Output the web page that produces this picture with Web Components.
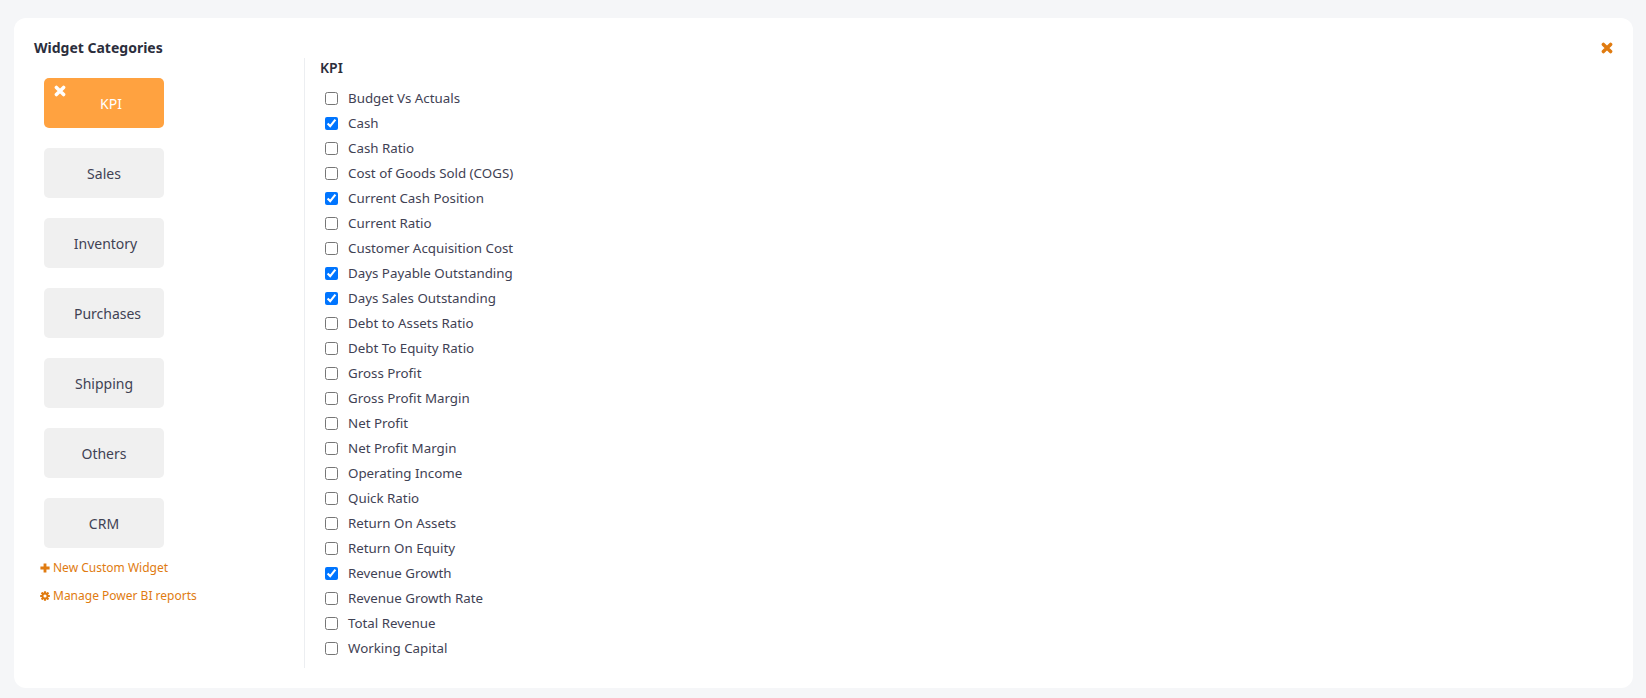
<!DOCTYPE html>
<html>
<head>
<meta charset="utf-8">
<title>Widget Categories</title>
<style>
  html,body{margin:0;height:100%;}
  body{background:#f5f6f8;font-family:"Noto Sans",sans-serif;color:#3f4254;}
</style>
</head>
<body>
<widget-panel></widget-panel>
<script>
const ICONS = {
  times:`<svg viewBox="0 0 12 12" width="100%" height="100%" style="display:block"><path d="M2.4 2.4L9.6 9.6M9.6 2.4L2.4 9.6" stroke="currentColor" stroke-width="3.5" stroke-linecap="round" fill="none"/></svg>`,
  plus:`<svg viewBox="0 0 12 12" width="100%" height="100%" style="display:block"><path d="M6 .5V11.5M.5 6H11.5" stroke="currentColor" stroke-width="3.4" fill="none"/></svg>`,
  cog:`<svg viewBox="0 0 12 12" width="100%" height="100%" style="display:block"><g fill="currentColor"><rect x="4.7" y=".2" width="2.6" height="11.6" rx=".4"/><rect x="4.7" y=".2" width="2.6" height="11.6" rx=".4" transform="rotate(45 6 6)"/><rect x="4.7" y=".2" width="2.6" height="11.6" rx=".4" transform="rotate(90 6 6)"/><rect x="4.7" y=".2" width="2.6" height="11.6" rx=".4" transform="rotate(135 6 6)"/><circle cx="6" cy="6" r="4.1"/></g><circle cx="6" cy="6" r="1.9" fill="#fff"/></svg>`
};

class CategoryButton extends HTMLElement{
  constructor(){
    super();
    this._shadowRoot = this.attachShadow({mode:"open"});
  }
  connectedCallback(){
    const active = this.hasAttribute("active");
    this._shadowRoot.innerHTML = `
      <style>
        :host{
          display:flex;
          position:relative;
          width:120px;
          height:50px;
          align-items:center;
          justify-content:center;
          box-sizing:border-box;
          border-radius:5px;
          background:#f0f0f0;
          color:#3f4254;
          font-size:14px;
        }
        :host([active]){
          background:#ffa240;
          color:#fff;
          padding-left:14px;
        }
        :host([nudge="1"]){padding-left:3px;}
        :host([nudge="2"]){padding-left:7px;}
        .close{
          position:absolute;
          left:10px;
          top:7px;
          width:12px;
          height:12px;
          color:#fff;
        }
      </style>
      ${active ? `<span class="close">${ICONS.times}</span>` : ""}
      <slot></slot>
    `;
  }
}
customElements.define("category-button", CategoryButton);

class SideLink extends HTMLElement{
  constructor(){
    super();
    this._shadowRoot = this.attachShadow({mode:"open"});
  }
  connectedCallback(){
    this._shadowRoot.innerHTML = `
      <style>
        :host{
          display:flex;
          align-items:center;
          gap:3px;
          color:#e07b10;
          font-size:12px;
          line-height:16px;
        }
        .icon{width:10px;height:10px;display:block;}
      </style>
      <span class="icon">${ICONS[this.getAttribute("icon")]}</span>
      <slot></slot>
    `;
  }
}
customElements.define("side-link", SideLink);

class WidgetCheck extends HTMLElement{
  constructor(){
    super();
    this._shadowRoot = this.attachShadow({mode:"open"});
  }
  connectedCallback(){
    this._shadowRoot.innerHTML = `
      <style>
        :host{
          display:flex;
          align-items:center;
          height:25px;
          color:#3f4254;
          font-size:13.33px;
        }
        input{
          width:13px;
          height:13px;
          margin:0 10px 0 0;
          flex:none;
        }
        .label{margin-bottom:2px;}
      </style>
      <input type="checkbox" ${this.hasAttribute("checked") ? "checked" : ""}>
      <span class="label"><slot></slot></span>
    `;
  }
}
customElements.define("widget-check", WidgetCheck);

class WidgetPanel extends HTMLElement{
  constructor(){
    super();
    this._shadowRoot = this.attachShadow({mode:"open"});
    this._categories = ["KPI","Sales","Inventory","Purchases","Shipping","Others","CRM"];
    this._widgets = [
      ["Budget Vs Actuals"],["Cash",1],["Cash Ratio"],["Cost of Goods Sold (COGS)"],
      ["Current Cash Position",1],["Current Ratio"],["Customer Acquisition Cost"],
      ["Days Payable Outstanding",1],["Days Sales Outstanding",1],["Debt to Assets Ratio"],
      ["Debt To Equity Ratio"],["Gross Profit"],["Gross Profit Margin"],["Net Profit"],
      ["Net Profit Margin"],["Operating Income"],["Quick Ratio"],["Return On Assets"],
      ["Return On Equity"],["Revenue Growth",1],["Revenue Growth Rate"],["Total Revenue"],["Working Capital"]
    ];
  }
  connectedCallback(){
    this.render();
  }
  render(){
    const nudge = {Inventory:1,Purchases:2};
    this._shadowRoot.innerHTML = `
      <style>
        :host{
          display:block;
          box-sizing:border-box;
          height:698px;
          padding:18px 13px 10px 14px;
        }
        .card{
          position:relative;
          box-sizing:border-box;
          height:100%;
          background:#fff;
          border-radius:12px;
          padding:20px;
        }
        .close{
          position:absolute;
          top:24px;
          right:20px;
          width:12px;
          height:12px;
          color:#e07b10;
        }
        h3{
          margin:0;
          font-size:14px;
          line-height:20px;
          font-weight:700;
          color:#2b2e3c;
        }
        .body{
          display:flex;
          height:610px;
        }
        .side{
          width:270px;
          flex:none;
          box-sizing:border-box;
          padding:0 0 0 6px;
        }
        .cats{
          display:flex;
          flex-direction:column;
          gap:20px;
          padding:20px 0 0 4px;
        }
        .links{
          display:flex;
          flex-direction:column;
          gap:12px;
          padding-top:12px;
        }
        .main{
          border-left:1px solid #eceef1;
          padding-left:15px;
          height:610px;
        }
        .main-title{
          font-size:14px;
          line-height:20px;
          font-weight:600;
          color:#2b2e3c;
          margin-bottom:8px;
        }
        .list{
          padding-left:5px;
        }
      </style>
      <div class="card">
        <span class="close">${ICONS.times}</span>
        <h3>Widget Categories</h3>
        <div class="body">
          <div class="side">
            <div class="cats">
              ${this._categories.map((c,i)=>`<category-button ${i===0?"active":""} ${nudge[c]?`nudge="${nudge[c]}"`:""}>${c}</category-button>`).join("")}
            </div>
            <div class="links">
              <side-link icon="plus">New Custom Widget</side-link>
              <side-link icon="cog">Manage Power BI reports</side-link>
            </div>
          </div>
          <div class="main">
            <div class="main-title">KPI</div>
            <div class="list">
              ${this._widgets.map(w=>`<widget-check ${w[1]?"checked":""}>${w[0]}</widget-check>`).join("")}
            </div>
          </div>
        </div>
      </div>
    `;
  }
}
customElements.define("widget-panel", WidgetPanel);
</script>
</body>
</html>
